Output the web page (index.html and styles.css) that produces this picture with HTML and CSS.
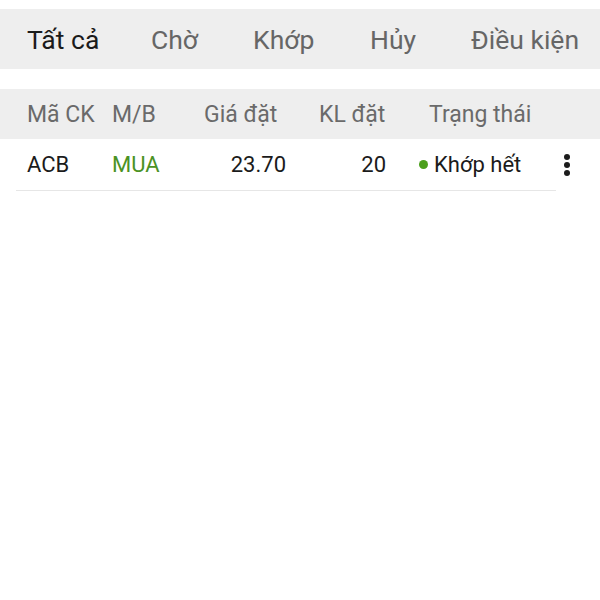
FILE: index.html
```html
<!DOCTYPE html>
<html lang="vi">
<head>
    <meta charset="UTF-8">
    <title>Sổ lệnh</title>
    <link rel="stylesheet" href="styles.css">
</head>
<body>
    <div class="tabs">
        <span class="tab active">Tất cả</span>
        <span class="tab">Chờ</span>
        <span class="tab">Khớp</span>
        <span class="tab">Hủy</span>
        <span class="tab">Điều kiện</span>
    </div>

    <div class="row head">
        <span class="c-code">Mã CK</span>
        <span class="c-side">M/B</span>
        <span class="c-price">Giá đặt</span>
        <span class="c-qty">KL đặt</span>
        <span class="c-status">Trạng thái</span>
    </div>

    <div class="row order">
        <span class="c-code">ACB</span>
        <span class="c-side buy">MUA</span>
        <span class="c-price num">23.70</span>
        <span class="c-qty num">20</span>
        <span class="c-status"><i class="dot"></i>Khớp hết</span>
        <span class="more">
            <svg width="8" height="24" viewBox="0 0 8 24">
                <circle cx="4" cy="4" r="3" fill="#1b1b1b"/>
                <circle cx="4" cy="12" r="3" fill="#1b1b1b"/>
                <circle cx="4" cy="20" r="3" fill="#1b1b1b"/>
            </svg>
        </span>
    </div>
</body>
</html>
```

FILE: styles.css
```css
body {
    margin: 0;
    padding-top: 9px;
    font-family: Roboto, "Noto Sans", sans-serif;
    background-color: #fff;
    color: #1b1b1b;
    white-space: nowrap;
}
.tabs {
    display: grid;
    grid-template-columns: 124px 102px 117px 101px auto;
    align-items: center;
    height: 60px;
    background-color: #eeeeee;
    padding-left: 27px;
    font-size: 26.5px;
    color: #666;
}
.tab.active { color: #1b1b1b; }

.row {
    display: grid;
    grid-template-columns: 85px 92px 82px 100px 141px auto;
    align-items: center;
    padding-left: 27px;
}
.head {
    margin-top: 20px;
    height: 50px;
    background-color: #eeeeee;
    font-size: 23px;
    color: #6a6a6a;
}
.head .c-qty { padding-left: 33px; }
.head .c-status { padding-left: 43px; }

.order {
    height: 51px;
    margin: 0 44px 0 16px;
    padding-left: 11px;
    border-bottom: 1px solid #e6e6e6;
    font-size: 22px;
}
.buy { color: #4b9224; }
.num { text-align: right; }
.order .c-status {
    display: flex;
    align-items: center;
    padding-left: 33px;
}
.dot {
    display: inline-block;
    width: 9px;
    height: 9px;
    border-radius: 50%;
    background-color: #4b9f1c;
    margin-right: 6px;
}
.more {
    display: flex;
    padding-left: 36px;
}
```
